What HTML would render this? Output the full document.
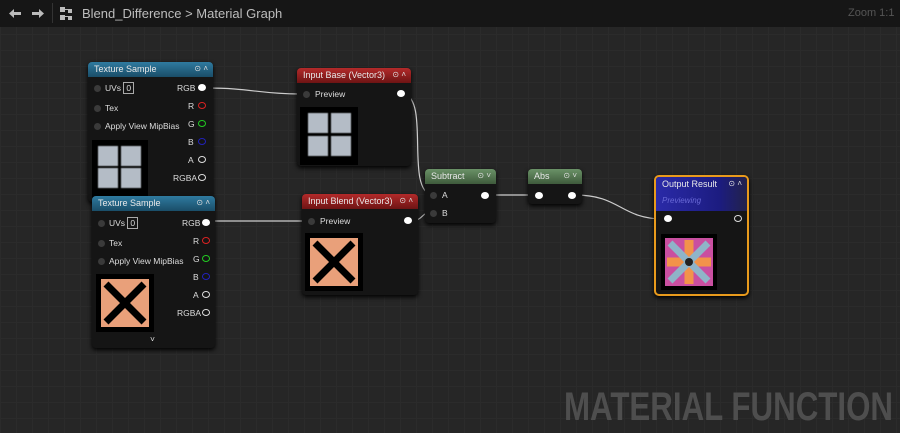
<!DOCTYPE html><html><head><style>
*{margin:0;padding:0;box-sizing:border-box}
body{width:900px;height:433px;overflow:hidden;background:#262626;font-family:"Liberation Sans",sans-serif;position:relative;
background-image:linear-gradient(#2b2b2b 1px,transparent 1px),linear-gradient(90deg,#2b2b2b 1px,transparent 1px);background-size:16px 16px;background-position:0 2px}
.top{position:absolute;left:0;top:0;width:900px;height:27px;background:#161616;color:#bdbdbd;font-size:13px}
.n{position:absolute;background:#151515;border-radius:4px;box-shadow:0 2px 5px #000;color:#ddd;font-size:8.5px}
.h{height:15px;border-radius:4px 4px 0 0;padding:2px 6px;font-size:9px;color:#e8e8e8;position:relative}
.hb{background:linear-gradient(#2f7aa0,#1a4d68)}
.hr{background:linear-gradient(#b32a2a,#6e1414)}
.hg{background:linear-gradient(#6a9267,#3f5b3c)}
.ic{position:absolute;right:5px;top:2px;font-size:8px;color:#ddd}
.t{position:absolute;white-space:nowrap}
.dot{position:absolute;width:7px;height:7px;border-radius:50%;background:#3a3a3a}
.w{position:absolute;width:8px;height:7px;border-radius:50%;background:#fff}
.o{position:absolute;width:8px;height:7px;border-radius:50%;border:1.5px solid #ddd}
.img{position:absolute;background:#000}
.g{position:absolute;background:#b4bcc6;filter:blur(.6px)}
</style></head><body>
<div class="top">
<svg width="80" height="27" style="position:absolute;left:0;top:0" fill="#bbb">
<path d="M9 13.5L14 9v3h7v3h-7v3z"/><path d="M44 13.5L39 9v3h-7v3h7v3z"/>
<rect x="52" y="3" width="1" height="20" fill="#333"/>
<rect x="60" y="7" width="5" height="5"/><rect x="60" y="15" width="5" height="5"/><rect x="68" y="9" width="4" height="4"/><rect x="68" y="16" width="4" height="4"/><path d="M65 9h3v1h-3zM65 16h3v1h-3z"/>
</svg>
<span class="t" style="left:82px;top:6px">Blend_Difference &gt; Material Graph</span>
<span class="t" style="left:848px;top:7px;color:#555;font-size:11px">Zoom 1:1</span></div>

<svg width="900" height="433" style="position:absolute;left:0;top:0" fill="none" stroke="#ccc" stroke-width="1.2">
<path d="M207 88 C250 88 260 94 300 94"/>
<path d="M404 94 C430 100 405 190 432 195"/>
<path d="M212 221 L306 221"/>
<path d="M411 221 C425 220 420 212 432 213"/>
<path d="M488 195 L536 195"/>
<path d="M575 195 C620 195 620 218 662 219"/>
<text x="564" y="420" font-family="Liberation Sans" font-weight="bold" font-size="40" fill="#4e4e4e" stroke="none" textLength="329" lengthAdjust="spacingAndGlyphs">MATERIAL FUNCTION</text>
</svg>

<!-- TS1 -->
<div class="n" style="left:88px;top:62px;width:125px;height:140px">
<div class="h hb">Texture Sample<span class="ic">⊙ ˄</span></div>
<div class="dot" style="left:6px;top:23px"></div><span class="t" style="left:17px;top:21px">UVs <span style="border:1px solid #aaa;padding:0 2px">0</span></span>
<div class="dot" style="left:6px;top:43px"></div><span class="t" style="left:17px;top:41px">Tex</span>
<div class="dot" style="left:6px;top:61px"></div><span class="t" style="left:17px;top:59px">Apply View MipBias</span>
<span class="t" style="left:89px;top:21px">RGB</span><div class="w" style="left:110px;top:22px"></div>
<span class="t" style="left:100px;top:39px">R</span><div class="o" style="left:110px;top:40px;border-color:#d22"></div>
<span class="t" style="left:100px;top:57px">G</span><div class="o" style="left:110px;top:58px;border-color:#2c2"></div>
<span class="t" style="left:100px;top:75px">B</span><div class="o" style="left:110px;top:76px;border-color:#22b"></div>
<span class="t" style="left:100px;top:93px">A</span><div class="o" style="left:110px;top:94px"></div>
<span class="t" style="left:85px;top:111px">RGBA</span><div class="o" style="left:110px;top:112px"></div>
<div class="img" style="left:4px;top:78px;width:56px;height:58px"><div class="g" style="left:6px;top:6px;width:20px;height:20px"></div><div class="g" style="left:29px;top:6px;width:20px;height:20px"></div><div class="g" style="left:6px;top:28px;width:20px;height:20px"></div><div class="g" style="left:29px;top:28px;width:20px;height:20px"></div></div>
</div>
<!-- TS2 -->
<div class="n" style="left:92px;top:196px;width:123px;height:152px">
<div class="h hb">Texture Sample<span class="ic">⊙ ˄</span></div>
<div class="dot" style="left:6px;top:24px"></div><span class="t" style="left:17px;top:22px">UVs <span style="border:1px solid #aaa;padding:0 2px">0</span></span>
<div class="dot" style="left:6px;top:44px"></div><span class="t" style="left:17px;top:42px">Tex</span>
<div class="dot" style="left:6px;top:62px"></div><span class="t" style="left:17px;top:60px">Apply View MipBias</span>
<span class="t" style="left:90px;top:22px">RGB</span><div class="w" style="left:110px;top:23px"></div>
<span class="t" style="left:101px;top:40px">R</span><div class="o" style="left:110px;top:41px;border-color:#d22"></div>
<span class="t" style="left:101px;top:58px">G</span><div class="o" style="left:110px;top:59px;border-color:#2c2"></div>
<span class="t" style="left:101px;top:76px">B</span><div class="o" style="left:110px;top:77px;border-color:#22b"></div>
<span class="t" style="left:101px;top:94px">A</span><div class="o" style="left:110px;top:95px"></div>
<span class="t" style="left:85px;top:112px">RGBA</span><div class="o" style="left:110px;top:113px"></div>
<div class="img" style="left:4px;top:78px;width:58px;height:58px"><svg width="58" height="58"><rect x="5" y="5" width="48" height="48" fill="#e9a07a"/><path d="M10 10L48 48M48 10L10 48" stroke="#000" stroke-width="7"/></svg></div>
<span class="t" style="left:58px;top:138px">˅</span>
</div>
<!-- Input Base -->
<div class="n" style="left:297px;top:68px;width:114px;height:98px">
<div class="h hr">Input Base (Vector3)<span class="ic">⊙ ˄</span></div>
<div class="dot" style="left:6px;top:23px"></div><span class="t" style="left:18px;top:21px">Preview</span>
<div class="w" style="left:100px;top:22px"></div>
<div class="img" style="left:3px;top:39px;width:58px;height:58px"><div class="g" style="left:8px;top:6px;width:20px;height:20px"></div><div class="g" style="left:31px;top:6px;width:20px;height:20px"></div><div class="g" style="left:8px;top:29px;width:20px;height:20px"></div><div class="g" style="left:31px;top:29px;width:20px;height:20px"></div></div>
</div>
<!-- Input Blend -->
<div class="n" style="left:302px;top:194px;width:116px;height:101px">
<div class="h hr">Input Blend (Vector3)<span class="ic">⊙ ˄</span></div>
<div class="dot" style="left:6px;top:24px"></div><span class="t" style="left:18px;top:22px">Preview</span>
<div class="w" style="left:102px;top:23px"></div>
<div class="img" style="left:3px;top:39px;width:58px;height:58px"><svg width="58" height="58"><rect x="5" y="5" width="48" height="48" fill="#e9a07a"/><path d="M10 10L48 48M48 10L10 48" stroke="#000" stroke-width="7"/></svg></div>
</div>
<!-- Subtract -->
<div class="n" style="left:425px;top:169px;width:71px;height:54px">
<div class="h hg">Subtract<span class="ic">⊙ ˅</span></div>
<div class="dot" style="left:5px;top:23px"></div><span class="t" style="left:17px;top:21px">A</span>
<div class="dot" style="left:5px;top:41px"></div><span class="t" style="left:17px;top:39px">B</span>
<div class="w" style="left:56px;top:23px"></div>
</div>
<!-- Abs -->
<div class="n" style="left:528px;top:169px;width:54px;height:35px">
<div class="h hg">Abs<span class="ic">⊙ ˅</span></div>
<div class="w" style="left:7px;top:23px"></div><div class="w" style="left:40px;top:23px"></div>
</div>
<!-- Output -->
<div class="n" style="left:654px;top:175px;width:95px;height:121px;border:2px solid #e89a1c;border-radius:5px">
<div class="h" style="height:34px;background:linear-gradient(90deg,#2a2aa8,#1c1c80 70%,#22224a);border-radius:3px 3px 0 0">Output Result<span class="ic">⊙ ˄</span><div style="color:#6a6ad8;font-size:8px;font-style:italic;margin-top:7px">Previewing</div></div>
<div class="w" style="left:8px;top:38px"></div><div class="o" style="left:78px;top:38px"></div>
<div class="img" style="left:5px;top:57px;width:56px;height:56px"><svg width="56" height="56"><rect x="4" y="4" width="48" height="48" fill="#c94fa0"/><path d="M28 6V50M6 28H50" stroke="#f2934a" stroke-width="9"/><path d="M9 9L47 47M47 9L9 47" stroke="#8fb4c8" stroke-width="7"/><circle cx="28" cy="28" r="4" fill="#222"/></svg></div>
</div>
</body></html>
